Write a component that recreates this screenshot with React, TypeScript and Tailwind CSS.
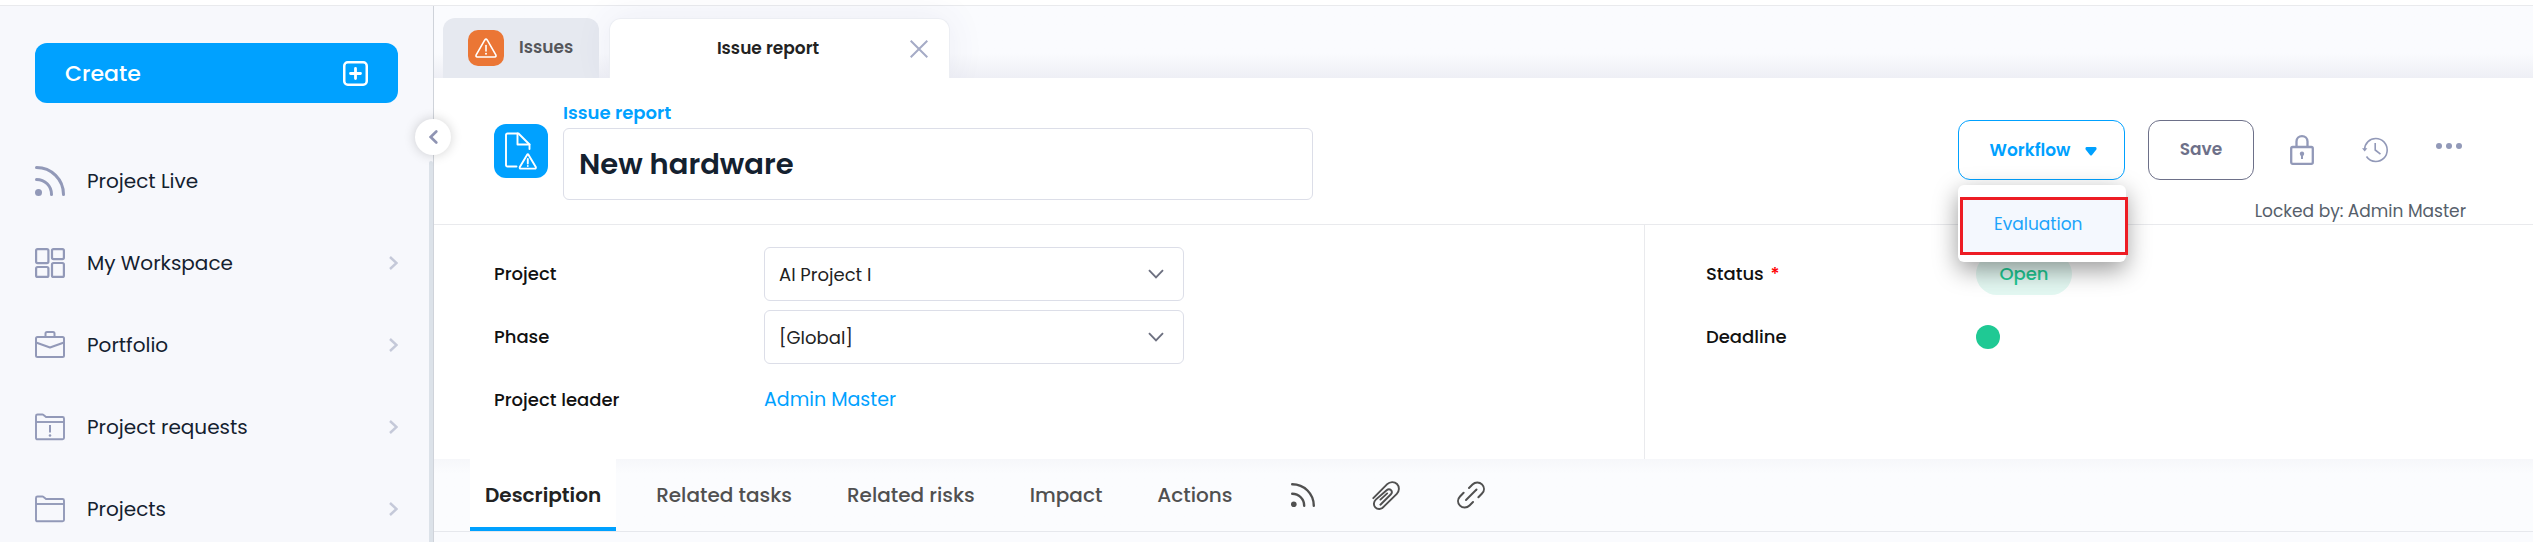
import { useState, type ReactNode } from "react";

type IconProps = { className?: string };

function RssIcon({ className }: IconProps) {
  return (
    <svg viewBox="0 0 30 30" fill="none" stroke="currentColor" strokeWidth="3" strokeLinecap="round" className={className} aria-hidden="true">
      <path d="M1.5 1.5C16.5 1.5 28.5 13.5 28.5 28.5" />
      <path d="M1.5 13.5C10 13.5 16.5 20 16.5 28.5" />
      <circle cx="3.5" cy="26.5" r="3.5" fill="currentColor" stroke="none" />
    </svg>
  );
}

function WorkspaceIcon({ className }: IconProps) {
  return (
    <svg viewBox="0 0 30 30" fill="none" stroke="currentColor" strokeWidth="2.2" className={className} aria-hidden="true">
      <rect x="1.100" y="1.100" width="12.300" height="14" rx="1.500" />
      <rect x="17" y="1.100" width="11.900" height="10" rx="1.500" />
      <rect x="1.100" y="19" width="12.300" height="9.900" rx="1.500" />
      <rect x="17" y="15" width="11.900" height="13.900" rx="1.500" />
    </svg>
  );
}

function BriefcaseIcon({ className }: IconProps) {
  return (
    <svg viewBox="0 0 30 30" fill="none" stroke="currentColor" strokeWidth="2" strokeLinejoin="round" className={className} aria-hidden="true">
      <rect x="1" y="7" width="28" height="20" rx="1.5" />
      <path d="M10.5 7V3.5Q10.5 2 12 2H18Q19.500 2 19.500 3.500V7" />
      <path d="M1 12.500L15 17.500L29 12.500" />
    </svg>
  );
}

function FolderIcon({ className, alert = false }: IconProps & { alert?: boolean }) {
  return (
    <svg viewBox="0 0 30 30" fill="none" stroke="currentColor" strokeWidth="1.900" strokeLinejoin="round" className={className} aria-hidden="true">
      <path d="M1 26V4Q1 2.500 2.500 2.500H7.500Q8.500 2.500 9.500 3.800L11 5H27.500Q29 5 29 6.500V26Q29 27.200 27.500 27.200H2.500Q1 27.200 1 26Z" />
      <path d="M1 10H29" />
      {alert && (
        <>
          <path d="M15 13V20.500" strokeWidth="2" />
          <circle cx="15" cy="23.500" r="1.300" fill="currentColor" stroke="none" />
        </>
      )}
    </svg>
  );
}

function ChevronRight({ className }: IconProps) {
  return (
    <svg viewBox="0 0 9 14" fill="none" stroke="currentColor" strokeWidth="2.400" className={className} aria-hidden="true">
      <path d="M1 1L7.500 7L1 13" />
    </svg>
  );
}

function PlusBoxIcon({ className }: IconProps) {
  return (
    <svg viewBox="0 0 25 25" fill="none" stroke="currentColor" className={className} aria-hidden="true">
      <rect x="1.250" y="1.250" width="22.500" height="22.500" rx="3.500" strokeWidth="2.500" />
      <path d="M12.500 7.500V17.500M7.500 12.500H17.500" strokeWidth="2.800" strokeLinecap="round" />
    </svg>
  );
}

function WarningIcon({ className }: IconProps) {
  return (
    <svg viewBox="0 0 22 20" fill="none" stroke="currentColor" strokeWidth="1.600" strokeLinejoin="round" className={className} aria-hidden="true">
      <path d="M9.800 1.900Q11 0.300 12.200 1.900L20.800 16.800Q21.500 18.800 19.800 19H2.200Q0.500 18.800 1.200 16.800Z" />
      <path d="M11 7.500V13" strokeLinecap="round" />
      <circle cx="11" cy="15.800" r="1" fill="currentColor" stroke="none" />
    </svg>
  );
}

function ReportIcon({ className }: IconProps) {
  return (
    <svg viewBox="0 0 32 38" fill="none" stroke="currentColor" strokeWidth="1.900" strokeLinejoin="round" strokeLinecap="round" className={className} aria-hidden="true">
      <path d="M11.500 34.500H2.500Q1 34.500 1 33V3Q1 1.500 2.500 1.500H13.500L24.500 12.500V17" />
      <path d="M12.500 1.500V12.500H24.500" />
      <path d="M22 23Q22.800 21.600 23.600 23L30.800 35Q31.200 36.500 29.800 36.600H15.800Q14.400 36.500 14.800 35Z" />
      <path d="M22.800 27V31.500" />
      <circle cx="22.800" cy="34" r="0.900" fill="currentColor" stroke="none" />
    </svg>
  );
}

function CloseIcon({ className }: IconProps) {
  return (
    <svg viewBox="0 0 18 18" fill="none" stroke="currentColor" strokeWidth="2" className={className} aria-hidden="true">
      <path d="M0.700 0.700L17.300 17.300M17.300 0.700L0.700 17.300" />
    </svg>
  );
}

function LockIcon({ className }: IconProps) {
  return (
    <svg viewBox="0 0 24 30" fill="none" stroke="currentColor" strokeWidth="2.300" className={className} aria-hidden="true">
      <rect x="1.200" y="12" width="21.600" height="16.800" rx="1.500" />
      <path d="M6.500 12V6.600C6.500 3.200 9 1.200 12 1.200S17.500 3.200 17.500 6.600V12" />
      <circle cx="12" cy="18.800" r="2.200" fill="currentColor" stroke="none" />
      <path d="M12 19V24" strokeWidth="2" />
    </svg>
  );
}

function HistoryIcon({ className }: IconProps) {
  return (
    <svg viewBox="0 0 26 26" fill="none" stroke="currentColor" strokeWidth="1.600" className={className} aria-hidden="true">
      <path d="M2.600 12.500C2.800 6 7.800 1.500 13.800 1.500C20.200 1.500 25.200 6.600 25.200 13S20.200 24.500 13.800 24.500C9.900 24.500 6.600 22.700 4.500 19.500" />
      <path d="M13.200 6V13L18.500 17.200" />
      <path d="M0 11.200H5.400L2.700 14.400Z" fill="currentColor" stroke="none" />
    </svg>
  );
}

function PaperclipIcon({ className }: IconProps) {
  return (
    <svg viewBox="0 0 28 29" fill="none" stroke="currentColor" strokeWidth="1.900" strokeLinecap="round" className={className} aria-hidden="true">
      <path d="M1.300 17.200L15.200 3.200C17.800 0.600 22.400 0.400 25 3C27.700 5.800 27.400 10.200 24.800 12.800L11.800 25.600C9.600 28.600 5.400 28.600 3.300 26.400C1.300 24.300 1.500 20.700 3.800 18.600L14.600 9.200C16.100 7.900 18 8.100 19 9.200C20.100 10.400 20 12.200 18.700 13.500L8.400 23.700" />
      <path d="M8.400 18.600L15.200 12.400" />
    </svg>
  );
}

function LinkIcon({ className }: IconProps) {
  return (
    <svg viewBox="0 0 28 28" fill="none" stroke="currentColor" strokeWidth="2" strokeLinecap="round" className={className} aria-hidden="true">
      <path d="M12 7L15.500 3.500C18.200 0.800 22.400 0.800 25 3.400S27.600 9.800 25 12.500L21.400 16.200" />
      <path d="M16 21L12.500 24.500C9.800 27.200 5.600 27.200 3 24.600S0.400 18.200 3 15.500L6.600 11.800" />
      <path d="M9 19L19.500 8.500" />
    </svg>
  );
}

function Caret({ className }: IconProps) {
  return (
    <svg viewBox="0 0 12 9" fill="currentColor" className={className} aria-hidden="true">
      <path d="M1.500 0H10.500Q12.200 0.800 11.200 2.800L7 8Q6 9.200 5 8L0.800 2.800Q-0.200 0.800 1.500 0Z" />
    </svg>
  );
}

const navItems: { label: string; icon: ReactNode; expandable: boolean }[] = [
  { label: "Project Live", icon: <RssIcon className="size-[30px]" />, expandable: false },
  { label: "My Workspace", icon: <WorkspaceIcon className="size-[30px]" />, expandable: true },
  { label: "Portfolio", icon: <BriefcaseIcon className="size-[30px]" />, expandable: true },
  { label: "Project requests", icon: <FolderIcon alert className="size-[30px]" />, expandable: true },
  { label: "Projects", icon: <FolderIcon className="size-[30px]" />, expandable: true },
];

function Sidebar() {
  return (
    <aside className="relative z-10 flex w-[434px] shrink-0 border-r border-[#cfd3da] bg-[#f7f8fc]">
      <div className="flex min-w-0 flex-1 flex-col pr-[31px] pl-[35px]">
        <button type="button" className="mt-[37px] flex h-[60px] shrink-0 items-center justify-between rounded-xl bg-[#00a1ff] px-[30px] text-[22px] font-medium text-white">
          Create
          <PlusBoxIcon className="size-[25px]" />
        </button>
        <nav className="mt-[37px] flex flex-col">
          {navItems.map((item) => (
            <a key={item.label} href="#" className="flex h-[82px] shrink-0 items-center text-xl text-[#14212f]">
              <span className="mr-[22px] text-[#9299b8]">{item.icon}</span>
              <span className="flex-1">{item.label}</span>
              {item.expandable && <ChevronRight className="h-[14px] w-[9px] text-[#c5c9d9]" />}
            </a>
          ))}
        </nav>
      </div>
      <div className="mt-[155px] w-1 rounded-t bg-[#dce2e9]" />
      <button type="button" aria-label="Collapse menu" className="absolute top-[113px] -right-[18px] flex size-9 items-center justify-center rounded-full bg-white text-[#8f94b3] shadow-[0_0_12px_rgba(0,0,0,0.18)]">
        <svg viewBox="0 0 9 14" fill="none" stroke="currentColor" strokeWidth="2.600" strokeLinecap="round" className="h-[14px] w-[9px]" aria-hidden="true">
          <path d="M7.300 1.500L1.700 7L7.300 12.500" />
        </svg>
      </button>
    </aside>
  );
}

function WindowTabs() {
  return (
    <div className="flex h-[72px] shrink-0 items-end gap-2.5 bg-linear-to-b from-[#fafbfe] from-65% to-[#eeeff5] pl-[9px]">
      <button type="button" className="flex h-[60px] w-[156px] items-center gap-[15px] rounded-t-xl bg-[#e6e9f0] pl-[25px] text-[17px] font-semibold text-[#55565a]">
        <span className="flex size-9 items-center justify-center rounded-[10px] bg-[#eb7635] text-white">
          <WarningIcon className="h-5 w-[22px]" />
        </span>
        Issues
      </button>
      <div className="flex h-[60px] w-[341px] items-center rounded-t-xl border border-b-0 border-[#eceef3] bg-white pr-[21px] pl-4 shadow-[0_0_36px_rgba(60,70,130,0.08)]">
        <button type="button" className="flex-1 text-[17px] font-semibold text-[#222]">Issue report</button>
        <button type="button" aria-label="Close tab" className="text-[#a5abc6]">
          <CloseIcon className="size-[18px]" />
        </button>
      </div>
    </div>
  );
}

function WorkflowMenu() {
  return (
    <div className="relative">
      <button type="button" aria-haspopup="menu" aria-expanded="true" className="flex h-[60px] w-[167px] items-center justify-center gap-[15px] rounded-xl border border-[#00a1ff] bg-white pt-0.5 pl-1 text-[17px] font-semibold text-[#00a1ff]">
        Workflow
        <Caret className="h-[9px] w-3" />
      </button>
      <div role="menu" className="absolute top-[65px] left-0 z-20 w-[168px] rounded-md bg-white pt-3 pb-[7px] shadow-[0_8px_24px_rgba(0,0,0,0.4)]">
        <button type="button" role="menuitem" className="ml-0.5 flex h-[58px] w-[168px] items-center border-[3px] border-[#ed1c24] bg-[#f4f8fe] pb-0.5 pl-[31px] text-[17px] text-[#1ca4fb]">
          Evaluation
        </button>
      </div>
    </div>
  );
}

function RecordHeader() {
  return (
    <header className="flex h-[147px] shrink-0 items-start border-b border-[#e9eaed] bg-white pr-[67px] pl-[60px]">
      <span className="mt-[46px] mr-[15px] flex size-[54px] shrink-0 items-center justify-center rounded-xl bg-[#00a1ff] text-white">
        <ReportIcon className="h-[38px] w-8" />
      </span>
      <div className="mt-[21px] flex max-w-[750px] min-w-0 flex-1 flex-col">
        <label htmlFor="record-title" className="h-[29px] text-lg leading-7 font-semibold text-[#00a1ff]">Issue report</label>
        <input id="record-title" type="text" defaultValue="New hardware" className="h-[72px] rounded-md border border-[#dcdee8] bg-white px-[15px] text-[29px] font-semibold text-[#14212f] outline-none" />
      </div>
      <div className="mt-[42px] ml-auto flex shrink-0 flex-col items-end">
        <div className="flex items-center">
          <WorkflowMenu />
          <button type="button" className="ml-[23px] h-[60px] w-[106px] rounded-xl border border-[#6d7089] bg-white text-[17px] font-semibold text-[#6d7089]">
            Save
          </button>
          <div className="mr-1 ml-9 flex items-center gap-12 text-[#9299b8]">
            <button type="button" aria-label="Lock"><LockIcon className="h-[30px] w-6" /></button>
            <button type="button" aria-label="History"><HistoryIcon className="size-[26px]" /></button>
            <button type="button" aria-label="More actions" className="flex gap-1 pb-2">
              <span className="size-[6px] rounded-full bg-current" />
              <span className="size-[6px] rounded-full bg-current" />
              <span className="size-[6px] rounded-full bg-current" />
            </button>
          </div>
        </div>
        <p className="mt-[17px] text-[17px] leading-7 text-[#56606b]">Locked by: Admin Master</p>
      </div>
    </header>
  );
}

function SelectField({ id, label, options }: { id: string; label: string; options: string[] }) {
  return (
    <div className="flex h-[54px] items-center">
      <label htmlFor={id} className="w-[270px] shrink-0 text-lg font-medium text-[#111]">{label}</label>
      <div className="grid w-full max-w-[420px] items-center">
        <select id={id} className="col-start-1 row-start-1 h-[54px] w-full appearance-none rounded-md border border-[#dcdee8] bg-white px-3.5 pt-0.5 text-lg text-[#222] outline-none">
          {options.map((option) => (
            <option key={option}>{option}</option>
          ))}
        </select>
        <svg viewBox="0 0 16 10" fill="none" stroke="currentColor" strokeWidth="1.900" className="pointer-events-none col-start-1 row-start-1 mr-5 h-[10px] w-4 justify-self-end text-[#6d7080]" aria-hidden="true">
          <path d="M1 1.200L8 8.300L15 1.200" />
        </svg>
      </div>
    </div>
  );
}

function Details() {
  return (
    <section className="grid h-[234px] shrink-0 grid-cols-[15fr_11fr] bg-white">
      <div className="flex flex-col gap-[9px] border-r border-[#e9eaed] pt-[22px] pl-[60px]">
        <SelectField id="project" label="Project" options={["AI Project I"]} />
        <SelectField id="phase" label="Phase" options={["[Global]"]} />
        <div className="flex h-[54px] items-center text-lg">
          <span className="w-[270px] shrink-0 font-medium text-[#111]">Project leader</span>
          <a href="#" className="text-[19px] text-[#00a1ff]">Admin Master</a>
        </div>
      </div>
      <div className="flex flex-col gap-[9px] pt-[22px] pl-[61px]">
        <div className="flex h-[54px] items-center text-lg font-medium">
          <span className="w-[270px] shrink-0 text-[#111]">
            Status <span className="ml-0.5 text-[#f00]">*</span>
          </span>
          <span className="flex h-[42px] w-24 items-center justify-center rounded-full bg-[#e3f8f2] text-[#1fc994]">Open</span>
        </div>
        <div className="flex h-[54px] items-center text-lg font-medium">
          <span className="w-[270px] shrink-0 text-[#111]">Deadline</span>
          <span role="img" aria-label="On time" className="size-6 rounded-full bg-[#1fc994]" />
        </div>
      </div>
    </section>
  );
}

const sectionTabs = ["Description", "Related tasks", "Related risks", "Impact", "Actions"];

function SectionTabs() {
  const [active, setActive] = useState("Description");
  return (
    <div className="flex h-[73px] shrink-0 border-b border-[#e6e8ed] bg-linear-to-b from-[#f6f7fa] to-[#fbfcfe] to-20% pl-9">
      <div role="tablist" className="flex gap-[25px]">
        {sectionTabs.map((tab) => (
          <button
            key={tab}
            type="button"
            role="tab"
            aria-selected={tab === active}
            onClick={() => setActive(tab)}
            className={
              tab === active
                ? "border-b-4 border-[#00a1ff] bg-white px-[15px] pt-1 text-xl font-semibold text-[#222]"
                : "border-b-4 border-transparent px-[15px] pt-1 text-xl font-medium text-[#505050]"
            }
          >
            {tab}
          </button>
        ))}
      </div>
      <div className="ml-11 flex items-center gap-[57px] text-[#505050]">
        <button type="button" aria-label="Feed"><RssIcon className="size-6" /></button>
        <button type="button" aria-label="Attachments"><PaperclipIcon className="h-[29px] w-7" /></button>
        <button type="button" aria-label="Links"><LinkIcon className="size-7" /></button>
      </div>
    </div>
  );
}

export default function App() {
  return (
    <div className="flex h-screen flex-col overflow-hidden bg-white pt-[5px] font-['Poppins','Inter',sans-serif]">
      <div className="flex min-h-0 flex-1 border-t border-[#e9eaed]">
        <Sidebar />
        <main className="flex min-w-0 flex-1 flex-col bg-[#fafbfe]">
          <WindowTabs />
          <RecordHeader />
          <Details />
          <SectionTabs />
        </main>
      </div>
    </div>
  );
}
